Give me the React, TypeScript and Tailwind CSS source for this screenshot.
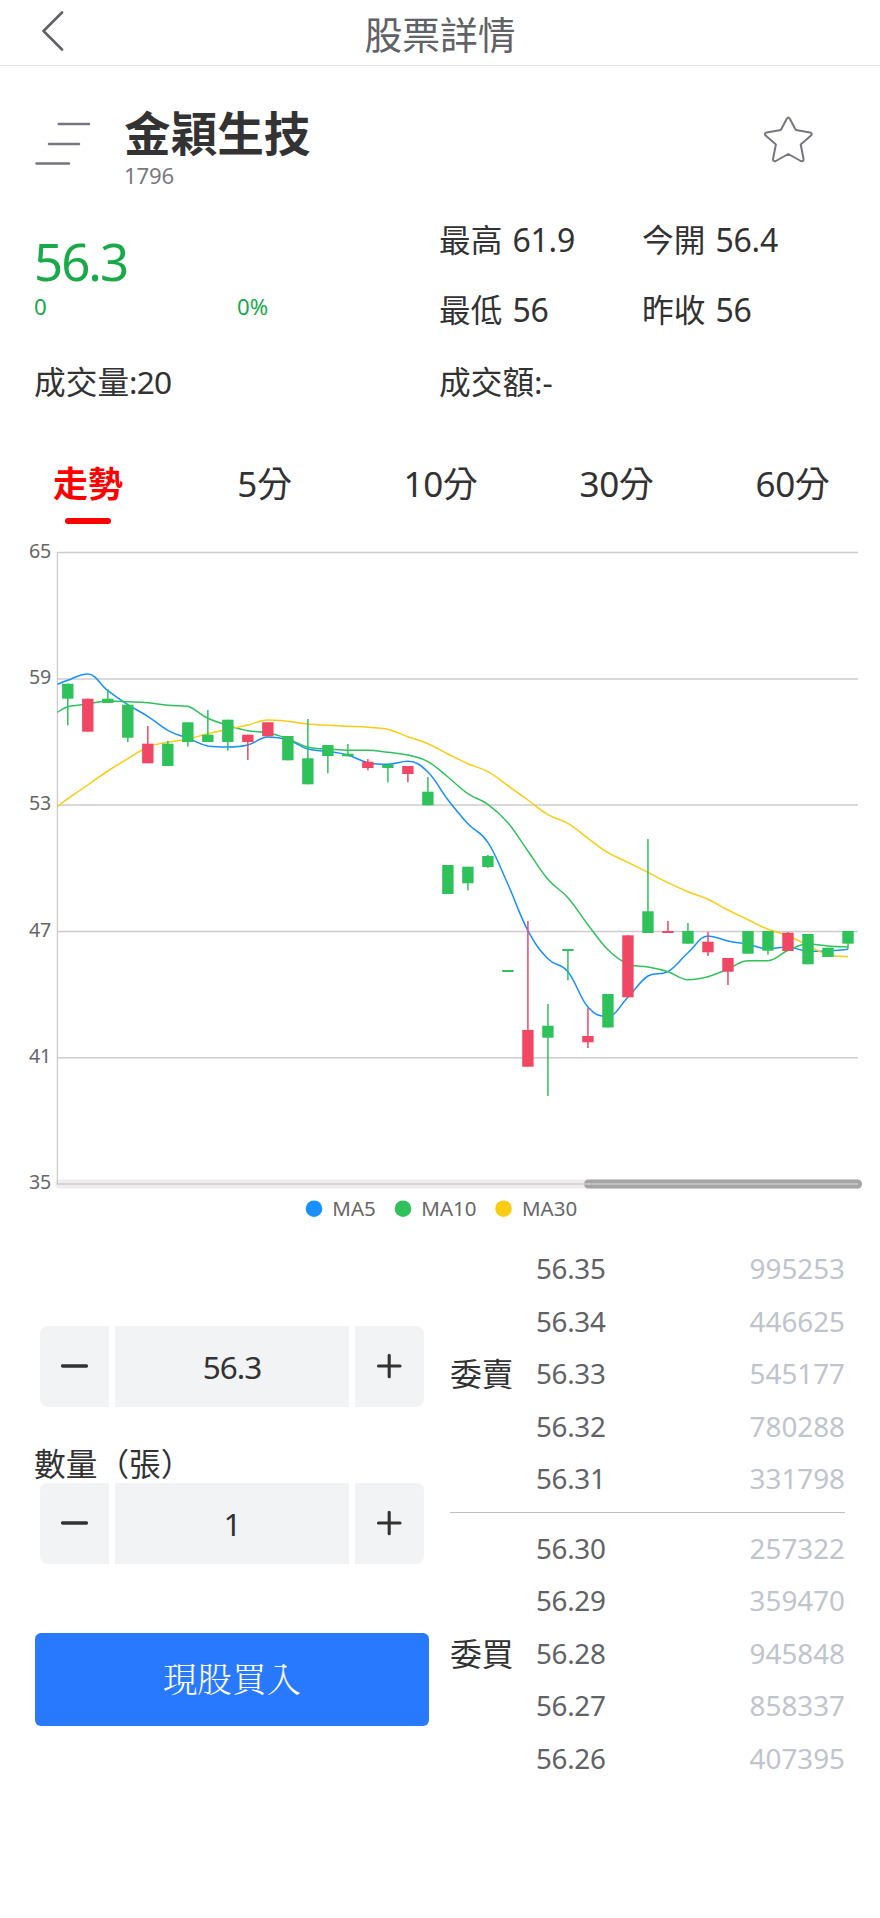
import React from "react";

type Candle = [top: number, bottom: number, high: number, low: number, up: boolean];

const GREEN = "#2fc25b";
const RED = "#f04864";
const BLUE = "#1890ff";
const YELLOW = "#facc14";

const FIRST_X = 67.8;
const STEP = 20.005;

const candles: Candle[] = [
  [683.7, 698.7, 683.7, 725.3, false],
  [698.7, 731.7, 698.7, 731.7, true],
  [698.7, 703, 689, 703, false],
  [704.7, 737.7, 704.7, 742, false],
  [743.7, 763.3, 726, 763.3, true],
  [743.7, 766, 741, 766, false],
  [722.3, 742, 722.3, 746.7, false],
  [734.7, 742, 710, 742, false],
  [719.7, 742, 719.7, 750.7, false],
  [734.7, 742, 734.7, 760, true],
  [722.3, 736.3, 722.3, 736.3, true],
  [736, 760.3, 736, 760.3, false],
  [758.3, 784.3, 719, 784.3, false],
  [745, 756, 745, 773.3, false],
  [753.7, 756.3, 744, 756.3, false],
  [761.7, 768, 759, 770.3, true],
  [764.7, 768, 764.7, 782.3, false],
  [766, 774, 766, 782.3, true],
  [791.7, 805.3, 777, 805.3, false],
  [865, 894, 865, 894, false],
  [866.7, 883.3, 866.7, 890.3, false],
  [856, 867, 855, 868, false],
  [970, 972, 970, 972, false],
  [1030, 1066.7, 921, 1066.7, true],
  [1025.7, 1037.7, 1004, 1096, false],
  [949, 951, 949, 980.3, false],
  [1036, 1042.3, 1008, 1048, true],
  [994, 1027.5, 994, 1027.5, false],
  [935.3, 997.3, 935.3, 997.3, true],
  [911.3, 933, 839, 933, false],
  [931, 933, 921, 933, true],
  [931, 943.7, 923, 943.7, false],
  [941.7, 952.3, 932, 956, true],
  [958, 971.7, 958, 985, true],
  [931, 953.7, 931, 953.7, false],
  [931, 950.7, 931, 954.7, false],
  [932.7, 951, 932, 951, true],
  [934, 964.3, 934, 964.3, false],
  [947.7, 957, 947.7, 957, false],
  [931, 943.7, 931, 949, false],
];

const ma5 = [
  684.3, 680.3, 674, 690.7, 704.7, 716.3, 730.3, 738.3, 746, 747, 745, 737, 739.7, 749, 751.3, 755, 762.7, 764.3,
  761.3, 772, 799.7, 823.7, 842.3, 884.3, 930.7, 958.7, 971.7, 1007, 1016.3, 997.3, 976, 971.7, 952.7, 936, 941,
  944.3, 948.7, 947, 951.3, 951, 949.3,
];
const ma10 = [
  712.3, 706.7, 704, 701, 701.7, 702.7, 705.3, 706.3, 718.3, 725.3, 730.7, 732.7, 738.7, 747.3, 749, 750.3, 750.3,
  752.3, 755, 761.7, 777, 793.7, 804.3, 822.7, 851, 879.3, 897.7, 924.7, 949.7, 964, 967, 971.7, 979.7, 976.7, 969,
  960.7, 960.7, 950.3, 944, 946, 947,
];
const ma30 = [
  806.7, 798.7, 785, 771, 758.7, 747, 742.3, 739, 733.7, 729.3, 725, 720, 721.3, 724, 725.3, 726.3, 727.3, 729.3,
  736.7, 743.7, 754, 763.7, 771.7, 785.7, 800, 814.7, 823.3, 838.3, 852.7, 862.3, 872.3, 882.7, 891.7, 899.3, 910,
  919.7, 929.3, 935.7, 945.3, 954.7, 956.7,
];

/* Bezier through the values, flat at local extremes; the first value sits on the axis. */
function smooth(values: number[]): string {
  const xs = values.map((_, i) => (i === 0 ? 57.5 : FIRST_X + (i - 1) * STEP));
  const last = values.length - 1;
  const handle = (i: number): [number, number] => {
    const a = Math.max(i - 1, 0);
    const b = Math.min(i + 1, last);
    const dx = (xs[b] - xs[a]) * 0.2;
    const turn = i > 0 && i < last && (values[i] - values[a]) * (values[b] - values[i]) <= 0;
    return [dx, turn ? 0 : (values[b] - values[a]) * 0.2];
  };
  let d = `M${xs[0]},${values[0]}`;
  for (let i = 0; i < last; i++) {
    const [ax, ay] = handle(i);
    const [bx, by] = handle(i + 1);
    const lo = Math.min(values[i], values[i + 1]);
    const hi = Math.max(values[i], values[i + 1]);
    const y1 = Math.min(hi, Math.max(lo, values[i] + ay));
    const y2 = Math.min(hi, Math.max(lo, values[i + 1] - by));
    d += `C${(xs[i] + ax).toFixed(2)},${y1.toFixed(2)} ${(xs[i + 1] - bx).toFixed(2)},${y2.toFixed(2)} ${xs[
      i + 1
    ].toFixed(2)},${values[i + 1]}`;
  }
  return d;
}

const grid = [
  { label: "65", y: 552.5 },
  { label: "59", y: 679 },
  { label: "53", y: 805 },
  { label: "47", y: 931.5 },
  { label: "41", y: 1057.7 },
  { label: "35", y: 1184 },
];

function Chart() {
  return (
    <svg className="block h-[704px] w-full shrink-0" viewBox="0 530 880 704">
      <rect x={55} y={1179.5} width={807} height={9} rx={4.5} fill="#f1ecef" />
      <rect x={584} y={1179.5} width={278} height={9} rx={4.5} fill="#a5a5a5" />
      {grid.map((g) => (
        <g key={g.label}>
          <line x1={57} x2={858} y1={g.y} y2={g.y} stroke="#ccc" strokeWidth={1.5} />
          <text x={51.3} y={g.y + 5.2} textAnchor="end" fontSize={19.6} fill="#666">
            {g.label}
          </text>
        </g>
      ))}
      <line x1={57.4} x2={57.4} y1={552} y2={1184.5} stroke="#ccc" strokeWidth={1.3} />
      <g fill="none" strokeWidth={1.5}>
        <path d={smooth(ma5)} stroke={BLUE} />
        <path d={smooth(ma10)} stroke={GREEN} />
        <path d={smooth(ma30)} stroke={YELLOW} />
      </g>
      {candles.map(([top, bottom, high, low, up], i) => {
        const x = FIRST_X + i * STEP;
        const color = up ? RED : GREEN;
        return (
          <g key={i} fill={color}>
            <rect x={x - 0.75} y={high} width={1.5} height={low - high} />
            <rect x={x - 5.7} y={top} width={11.4} height={bottom - top} />
          </g>
        );
      })}
      <g fontSize={20.5} fill="#666">
        <circle cx={314} cy={1208.7} r={8.3} fill={BLUE} />
        <text x={332.3} y={1216}>MA5</text>
        <circle cx={403} cy={1208.7} r={8.3} fill={GREEN} />
        <text x={421.3} y={1216}>MA10</text>
        <circle cx={503.5} cy={1208.7} r={8.3} fill={YELLOW} />
        <text x={522} y={1216}>MA30</text>
      </g>
    </svg>
  );
}

function Stepper({ value }: { value: string }) {
  return (
    <div className="ml-[5px] flex h-[81px] w-[384px] gap-1.5 text-[#323233]">
      <button className="flex w-[69px] items-center justify-center rounded-l-lg bg-[#f2f3f5]">
        <svg width="28" height="28" viewBox="0 0 28 28" stroke="currentColor" strokeWidth="3.3" strokeLinecap="round">
          <path d="M1.5 13H25.5" />
        </svg>
      </button>
      <div className="flex flex-1 items-center justify-center bg-[#f2f3f5] pt-px text-[31.5px] tracking-[-1px]">
        {value}
      </div>
      <button className="flex w-[69px] items-center justify-center rounded-r-lg bg-[#f2f3f5]">
        <svg width="28" height="28" viewBox="0 0 28 28" stroke="currentColor" strokeWidth="3.1" strokeLinecap="round">
          <path d="M2.5 13H24M13.2 2.2V23.7" />
        </svg>
      </button>
    </div>
  );
}

function Book({ label, rows }: { label: string; rows: [string, string][] }) {
  return (
    <div className="flex items-center">
      <div className="w-[86px] text-[31.7px] text-[#323233]">{label}</div>
      <div className="flex-1">
        {rows.map(([price, amount]) => (
          <div key={price} className="flex h-[52.5px] items-center justify-between text-[27.8px]">
            <span className="tracking-[-0.3px] text-[#606266]">{price}</span>
            <span className="text-[#c0c4cc]">{amount}</span>
          </div>
        ))}
      </div>
    </div>
  );
}

function Stat({ label, value }: { label: string; value: string }) {
  return (
    <p className="flex leading-[70px]">
      <span className="text-[31.7px]">{label}</span>
      <span className="ml-[10px] tracking-[-0.2px]">{value}</span>
    </p>
  );
}

const asks: [string, string][] = [
  ["56.35", "995253"],
  ["56.34", "446625"],
  ["56.33", "545177"],
  ["56.32", "780288"],
  ["56.31", "331798"],
];
const bids: [string, string][] = [
  ["56.30", "257322"],
  ["56.29", "359470"],
  ["56.28", "945848"],
  ["56.27", "858337"],
  ["56.26", "407395"],
];

export default function App() {
  return (
    <div className="flex h-[1918px] w-[880px] flex-col overflow-hidden bg-white font-['Noto_Sans','Noto_Sans_CJK_TC',sans-serif] leading-none text-[#323233]">
      <header className="grid h-[66px] shrink-0 grid-cols-[1fr_auto_1fr] items-center border-b border-[#e4e4e6] text-[#606266]">
        <svg className="ml-[39px]" width="26" height="44" viewBox="0 0 26 44" fill="none" stroke="currentColor" strokeWidth="2.6" strokeLinecap="round" strokeLinejoin="round">
          <path d="M23 1.5L4.5 20L23 38.5" />
        </svg>
        <h1 className="pt-1 text-[37.8px]">股票詳情</h1>
      </header>

      <section className="flex h-[154px] shrink-0 items-start pt-[41px]">
        <svg className="mt-[10px] ml-[34px] shrink-0" width="60" height="50" viewBox="0 0 60 50" stroke="#77757f" strokeWidth="2.5" strokeLinecap="round">
          <path d="M24.7 7H55M15 27H45M2.5 46.5H35" />
        </svg>
        <div className="ml-[30px] flex-1">
          <h2 className="text-[46.6px] leading-[52px] font-bold text-[#333]">金穎生技</h2>
          <p className="text-[22.2px] leading-[33px] tracking-[-0.2px] text-[#7a7880]">1796</p>
        </div>
        <svg className="mt-[6px] mr-[64px]" width="56" height="52" viewBox="0 0 56 52" fill="none" stroke="#77757f" strokeWidth="2" strokeLinejoin="round">
          <path d="M26.8 5.8Q28.3 3.4 29.8 5.8L35.8 17L50 19.4Q52.9 20.4 51 22.6L40.7 31.5L43.6 46Q43.6 49 40.8 48L28.3 41L15.8 48Q13 49 13 46L15.9 31.5L5.6 22.6Q3.7 20.4 6.6 19.4L20.8 17Z" />
        </svg>
      </section>

      <section className="grid h-[220px] shrink-0 grid-cols-[405px_203px_1fr] pl-[34px] text-[32px]">
        <div className="pt-[13px] text-[#19a948]">
          <p className="text-[51px] leading-[56px] tracking-[-2px]">56.3</p>
          <p className="flex text-[22.2px] leading-[36px]">
            <span className="w-[203px]">0</span>
            <span>0%</span>
          </p>
        </div>
        <div className="-mt-[15px]">
          <Stat label="最高" value="61.9" />
          <Stat label="最低" value="56" />
        </div>
        <div className="-mt-[15px]">
          <Stat label="今開" value="56.4" />
          <Stat label="昨收" value="56" />
        </div>
        <p className="h-[94px] text-[31.7px] leading-[71px]">
          成交量<span className="tracking-[-0.8px]">:20</span>
        </p>
        <p className="text-[31.7px] leading-[71px]">成交額:-</p>
      </section>

      <nav className="grid h-[90px] shrink-0 grid-cols-5 pt-[19px] text-[35px]">
        <div className="flex flex-col items-center font-bold text-[#f00]">
          <span className="leading-[50px]">走勢</span>
          <i className="mt-[9px] h-[6px] w-[46px] rounded-full bg-[#f00]" />
        </div>
        {["5分", "10分", "30分", "60分"].map((t) => (
          <div key={t} className="pl-px text-center leading-[50px] tracking-[-0.3px]">
            {t}
          </div>
        ))}
      </nav>

      <Chart />

      <section className="flex shrink-0 px-[35px] pt-[9px]">
        <div className="w-[394px] pt-[83px]">
          <Stepper value="56.3" />
          <p className="mt-[38px] -ml-px h-[38px] text-[31.7px] leading-[38px]">數量（張）</p>
          <Stepper value="1" />
          <button className="mt-[69px] flex h-[93px] w-[394px] items-center justify-center rounded-md bg-[#2979ff] pb-1 font-['Noto_Serif_CJK_TC','Noto_Sans_CJK_TC',sans-serif] text-[34.5px] font-light text-white">
            現股買入
          </button>
        </div>
        <div className="ml-[21px] flex-1">
          <Book label="委賣" rows={asks} />
          <hr className="mt-[6px] mb-[10px] border-[#c0c0c0]" />
          <Book label="委買" rows={bids} />
        </div>
      </section>
    </div>
  );
}
